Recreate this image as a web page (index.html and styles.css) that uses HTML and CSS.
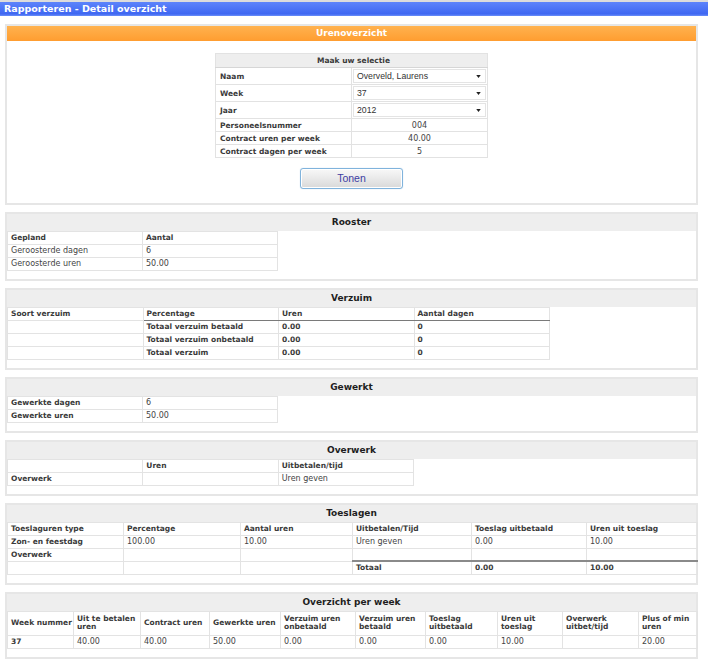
FILE: index.html
```html
<!DOCTYPE html>
<html lang="nl">
<head>
<meta charset="utf-8">
<title>Rapporteren - Detail overzicht</title>
<link rel="stylesheet" href="styles.css">
</head>
<body>
<div class="titlebar">Rapporteren - Detail overzicht</div>
<main class="content">
  <section class="panel panel-sel">
    <h2 class="orange">Urenoverzicht</h2>
    <table class="sel">
      <tr class="r-title"><th colspan="2">Maak uw selectie</th></tr>
      <tr class="r-select"><th>Naam</th><td><div class="dd"><span>Overveld, Laurens</span><svg class="tri" width="5" height="3" viewBox="0 0 6 4"><path d="M0 0H6L3 4Z"/></svg></div></td></tr>
      <tr class="r-select"><th>Week</th><td><div class="dd"><span>37</span><svg class="tri" width="5" height="3" viewBox="0 0 6 4"><path d="M0 0H6L3 4Z"/></svg></div></td></tr>
      <tr class="r-select"><th>Jaar</th><td><div class="dd"><span>2012</span><svg class="tri" width="5" height="3" viewBox="0 0 6 4"><path d="M0 0H6L3 4Z"/></svg></div></td></tr>
      <tr class="r-info"><th>Personeelsnummer</th><td>004</td></tr>
      <tr class="r-info"><th>Contract uren per week</th><td>40.00</td></tr>
      <tr class="r-info r-last"><th>Contract dagen per week</th><td>5</td></tr>
    </table>
    <div class="btnrow"><button class="btn" type="button">Tonen</button></div>
  </section>

  <section class="panel">
    <h2 class="phead">Rooster</h2>
    <table class="grid w2">
      <tr><th>Gepland</th><th>Aantal</th></tr>
      <tr><td>Geroosterde dagen</td><td>6</td></tr>
      <tr><td>Geroosterde uren</td><td>50.00</td></tr>
    </table>
  </section>

  <section class="panel">
    <h2 class="phead">Verzuim</h2>
    <table class="grid w4">
      <tr><th>Soort verzuim</th><th class="ul">Percentage</th><th class="ul">Uren</th><th class="ul">Aantal dagen</th></tr>
      <tr><td></td><th>Totaal verzuim betaald</th><th>0.00</th><th>0</th></tr>
      <tr><td></td><th>Totaal verzuim onbetaald</th><th>0.00</th><th>0</th></tr>
      <tr><td></td><th>Totaal verzuim</th><th>0.00</th><th>0</th></tr>
    </table>
  </section>

  <section class="panel">
    <h2 class="phead">Gewerkt</h2>
    <table class="grid w2">
      <tr><th>Gewerkte dagen</th><td>6</td></tr>
      <tr><th>Gewerkte uren</th><td>50.00</td></tr>
    </table>
  </section>

  <section class="panel">
    <h2 class="phead">Overwerk</h2>
    <table class="grid w3">
      <tr><th></th><th>Uren</th><th>Uitbetalen/tijd</th></tr>
      <tr><th>Overwerk</th><td></td><td>Uren geven</td></tr>
    </table>
  </section>

  <section class="panel">
    <h2 class="phead">Toeslagen</h2>
    <table class="grid toes">
      <colgroup><col class="t1"><col class="t2"><col class="t3"><col class="t4"><col class="t5"><col class="t6"></colgroup>
      <tr><th>Toeslaguren type</th><th>Percentage</th><th>Aantal uren</th><th>Uitbetalen/Tijd</th><th>Toeslag uitbetaald</th><th>Uren uit toeslag</th></tr>
      <tr><th>Zon- en feestdag</th><td>100.00</td><td>10.00</td><td>Uren geven</td><td>0.00</td><td>10.00</td></tr>
      <tr><th>Overwerk</th><td></td><td></td><td></td><td></td><td></td></tr>
      <tr><td></td><td></td><td></td><th class="ol">Totaal</th><th class="ol">0.00</th><th class="ol">10.00</th></tr>
    </table>
  </section>

  <section class="panel">
    <h2 class="phead">Overzicht per week</h2>
    <table class="grid week">
      <colgroup><col class="k1"><col class="k2"><col class="k3"><col class="k4"><col class="k5"><col class="k6"><col class="k7"><col class="k8"><col class="k9"><col class="k10"></colgroup>
      <tr class="r-two"><th>Week nummer</th><th>Uit te betalen uren</th><th>Contract uren</th><th>Gewerkte uren</th><th>Verzuim uren onbetaald</th><th>Verzuim uren betaald</th><th>Toeslag uitbetaald</th><th>Uren uit toeslag</th><th>Overwerk uitbet/tijd</th><th>Plus of min uren</th></tr>
      <tr><th>37</th><td>40.00</td><td>40.00</td><td>50.00</td><td>0.00</td><td>0.00</td><td>0.00</td><td>10.00</td><td></td><td>20.00</td></tr>
    </table>
  </section>
</main>
</body>
</html>
```

FILE: styles.css
```css
* { box-sizing: border-box; }

body {
  margin: 0;
  background: #fff;
  font-family: "DejaVu Sans", Verdana, sans-serif;
  color: #444;
}

.titlebar {
  height: 16px;
  border-top: 2px solid #dcdcdc;
  background: linear-gradient(#5d84fb, #3f67f2 85%, #6b8ff9);
  color: #fff;
  font-weight: bold;
  font-size: 9.5px;
  line-height: 14px;
  padding-left: 4px;
}

.content {
  display: flex;
  flex-direction: column;
  gap: 7px;
  padding: 8px 10px 0 5px;
}

.panel {
  border: 2px solid #e6e6e6;
  background: #fff;
  padding-bottom: 8px;
}

.phead {
  margin: 0;
  height: 17px;
  line-height: 17px;
  background: #eeeeee;
  text-align: center;
  font-size: 9px;
  font-weight: bold;
  color: #1e1e1e;
}

.orange {
  margin: 0;
  height: 15px;
  line-height: 15px;
  background: linear-gradient(#ffb24f, #ff9d30);
  text-align: center;
  font-size: 9px;
  font-weight: bold;
  color: #fff;
}

/* selection panel */
.panel-sel {
  display: flex;
  flex-direction: column;
  align-items: center;
  padding-bottom: 14px;
}
.panel-sel .orange { align-self: stretch; }

.sel {
  margin-top: 12px;
  width: 273px;
  border-collapse: collapse;
  border: 1px solid #8a8a8a;
  table-layout: fixed;
  font-size: 7.5px;
}
.sel th, .sel td {
  border: 1px solid #e2e2e2;
  padding: 0 0 0 4px;
}
.sel th { text-align: left; color: #3a3a3a; width: 136px; }
.sel .r-title th {
  text-align: center;
  background: #eeeeee;
  height: 14px;
  border-bottom: 1px solid #d6d6d6;
}
.sel .r-select th, .sel .r-select td { height: 16px; }
.sel .r-select td { padding: 1px; }
.sel .r-info th, .sel .r-info td { height: 13px; }
.sel .r-info td { text-align: center; padding: 0; font-size: 8px; }

.dd {
  display: flex;
  align-items: center;
  justify-content: space-between;
  height: 14px;
  border: 1px solid #e4e4e4;
  background: #fff;
  padding: 0 4px 0 3px;
  font-family: "Liberation Sans", Arial, sans-serif;
  font-size: 8.7px;
  color: #333;
}
.tri { fill: #222; }

.btnrow { margin-top: 9px; }
.btn {
  width: 103px;
  height: 21px;
  border: 1px solid #80b3dc;
  border-radius: 3px;
  background: linear-gradient(#f8f8f8, #e9e9e9 50%, #d9d9d9);
  box-shadow: inset 0 0 0 1px #ffffff, 0 0 1px #a8cbe8;
  font-family: "Liberation Sans", Arial, sans-serif;
  font-size: 10.5px;
  color: #3c3ca2;
  padding: 0;
}

/* data grids */
.grid {
  border-collapse: collapse;
  table-layout: fixed;
  font-size: 8px;
}
.grid th, .grid td {
  height: 13px;
  border: 1px solid #e3e3e3;
  padding: 0 0 0 3px;
  text-align: left;
  line-height: 9px;
  overflow: hidden;
  white-space: nowrap;
}
.grid th { font-weight: bold; font-size: 7.5px; color: #3a3a3a; }
.grid td { color: #444; }

.w2 { width: 271px; }
.w3 { width: 407px; }
.w4 { width: 543px; }
.toes { width: 690px; }
.week { width: 690px; }

.ul { border-bottom: 1px solid #7a7a7a !important; }
.ol { border-top: 2px solid #8a8a8a !important; }

.t1 { width: 116px; } .t2 { width: 117px; } .t3 { width: 112px; }
.t4 { width: 119px; } .t5 { width: 115px; } .t6 { width: 111px; }

.k1 { width: 66px; } .k2 { width: 67px; } .k3 { width: 69px; } .k4 { width: 71px; }
.k5 { width: 75px; } .k6 { width: 70px; } .k7 { width: 72px; } .k8 { width: 65px; }
.k9 { width: 76px; } .k10 { width: 59px; }

.week .r-two th {
  height: 24px;
  white-space: normal;
  vertical-align: middle;
  line-height: 8px;
}
```
